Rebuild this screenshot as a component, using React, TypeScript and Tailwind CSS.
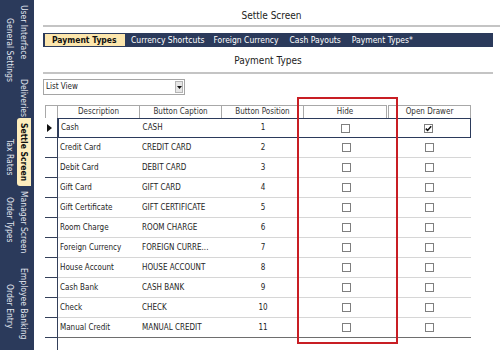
import React from 'react';

const rows: [string, string, string, boolean][] = [
  ['Cash', 'CASH', '1', true],
  ['Credit Card', 'CREDIT CARD', '2', false],
  ['Debit Card', 'DEBIT CARD', '3', false],
  ['Gift Card', 'GIFT CARD', '4', false],
  ['Gift Certificate', 'GIFT CERTIFICATE', '5', false],
  ['Room Charge', 'ROOM CHARGE', '6', false],
  ['Foreign Currency', 'FOREIGN CURRE...', '7', false],
  ['House Account', 'HOUSE ACCOUNT', '8', false],
  ['Cash Bank', 'CASH BANK', '9', false],
  ['Check', 'CHECK', '10', false],
  ['Manual Credit', 'MANUAL CREDIT', '11', false],
];

function Checkbox({ checked }: { checked?: boolean }) {
  return (
    <span className="w-[9px] h-[9px] border border-[#7f7f7f] bg-white flex items-center justify-center">
      {checked && (
        <svg width="7" height="7" viewBox="0 0 7 7">
          <path d="M0.8 3.6 L2.6 5.4 L6.2 1.2" fill="none" stroke="#111" strokeWidth="1.5" />
        </svg>
      )}
    </span>
  );
}

function SideTab({ label, className }: { label: string; className: string }) {
  return (
    <div className={`flex justify-center ${className}`}>
      <span className="[writing-mode:vertical-rl] leading-[12px] whitespace-nowrap">{label}</span>
    </div>
  );
}

function Sidebar() {
  return (
    <aside className="w-[34px] shrink-0 bg-[#2b3a5b] flex pl-[3px] text-[8.5px] text-[#e1e5ee]">
      {/* outer row of tabs */}
      <div className="w-[14px] flex flex-col">
        <SideTab label="General Settings" className="h-[126px] items-start pt-[18px]" />
        <SideTab label="Tax Rates" className="h-[62px] items-center" />
        <SideTab label="Order Types" className="h-[64px] items-center" />
        <SideTab label="Order Entry" className="h-[98px] items-start pt-[32px]" />
      </div>
      {/* inner row of tabs */}
      <div className="w-[14px] flex flex-col">
        <SideTab label="User Interface" className="h-[72px] items-start pt-[5px]" />
        <SideTab label="Deliveries" className="h-[46px] items-center pt-[6px]" />
        <div className="h-[68px] flex items-center justify-center bg-[#fdedbd] rounded-l-[3px] text-[#111] font-bold">
          <span className="[writing-mode:vertical-rl] leading-[12px] whitespace-nowrap">Settle Screen</span>
        </div>
        <SideTab label="Manager Screen" className="h-[72px] items-center" />
        <SideTab label="Employee Banking" className="h-[92px] items-center" />
      </div>
    </aside>
  );
}

function Grid() {
  return (
    <div className="relative ml-[2px] mt-[10px] flex-1 flex flex-col text-[8px]">
      {/* header */}
      <div className="flex h-[13px] text-[#333]">
        <div className="w-[13px] border-t border-l border-r border-[#a8a8a8]" />
        <div className="w-[82px] border-t border-r border-[#a8a8a8] flex items-center justify-center">Description</div>
        <div className="w-[82px] border-t border-r border-[#a8a8a8] flex items-center justify-center">Button Caption</div>
        <div className="w-[82px] border-t border-r border-[#a8a8a8] flex items-center justify-center">Button Position</div>
        <div className="w-[83px] border-t border-r border-[#a8a8a8] flex items-center justify-center">Hide</div>
        <div className="w-[83px] border-t border-l border-r border-[#a8a8a8] ml-[1px] flex items-center justify-center">Open Drawer</div>
      </div>
      {rows.map(([desc, caption, pos, drawer], i) => {
        const selected = i === 0;
        const last = i === rows.length - 1;
        return (
          <div key={desc} className="flex h-[20px]">
            <div className="w-[13px] border-b border-r border-[#34405a] flex items-center pl-[2px]">
              {selected && (
                <svg width="5" height="8" viewBox="0 0 5 8">
                  <polygon points="0,0 5,4 0,8" fill="#111" />
                </svg>
              )}
            </div>
            <div
              className={`w-[413px] flex items-center ${
                selected
                  ? 'border border-[#2b3a5b]'
                  : last
                    ? 'border-b border-[#6e6e6e]'
                    : 'border-b border-[#d6d6d6]'
              }`}
            >
              <div className="w-[82px] pl-[2px] whitespace-nowrap">{desc}</div>
              <div className="w-[82px] pl-[2px] whitespace-nowrap">{caption}</div>
              <div className="w-[82px] text-center">{pos}</div>
              <div className="w-[84px] flex justify-center">
                <Checkbox />
              </div>
              <div className="w-[83px] flex justify-center">
                <Checkbox checked={drawer} />
              </div>
            </div>
          </div>
        );
      })}
      <div className="flex-1 ml-[12px] border-l border-[#34405a]" />

      {/* highlight around Hide column */}
      <div className="absolute left-[252px] top-[-8px] w-[101px] h-[247px] border-2 border-[#c81e24]" />
    </div>
  );
}

export default function App() {
  return (
    <div className="w-[500px] h-[350px] flex bg-white overflow-hidden font-['DejaVu_Sans_Condensed','DejaVu_Sans',sans-serif] font-stretch-condensed text-[#1e1e1e]">
      <Sidebar />
      <main className="flex-1 flex flex-col pl-[9px]">
        <div className="h-[25px] pt-[10px] text-center text-[10px] leading-[12px] text-[#222]">Settle Screen</div>
        <div className="h-[2px] bg-[#c4c4c4]" />

        <div className="mt-[6px] mr-[7px] h-[14px] bg-[#2b3a5b] flex items-stretch py-[1px] text-[8.5px] text-white">
          <div className="ml-[2px] w-[80px] bg-[#fce6ad] text-[#111] font-bold flex items-center pl-[7px]">
            Payment Types
          </div>
          <div className="flex items-center ml-[6px]">Currency Shortcuts</div>
          <div className="flex items-center ml-[9px]">Foreign Currency</div>
          <div className="flex items-center ml-[11px]">Cash Payouts</div>
          <div className="flex items-center ml-[11px]">Payment Types*</div>
        </div>

        <div className="h-[25px] mr-[7px] pt-[8px] text-center text-[10px] leading-[12px] text-[#222]">Payment Types</div>
        <div className="h-[2px] mr-[7px] bg-[#c4c4c4]" />

        <div className="mt-[5px] w-[142px] h-[16px] border border-[#a5a5a5] flex items-center text-[8px]">
          <span className="flex-1 pl-[2px]">List View</span>
          <span className="w-[8px] h-[12px] mr-[1px] bg-[#e6e6e6] border border-[#b5b5b5] flex items-center justify-center">
            <svg width="5" height="3" viewBox="0 0 5 3">
              <polygon points="0,0 5,0 2.5,3" fill="#111" />
            </svg>
          </span>
        </div>

        <Grid />
      </main>
    </div>
  );
}
